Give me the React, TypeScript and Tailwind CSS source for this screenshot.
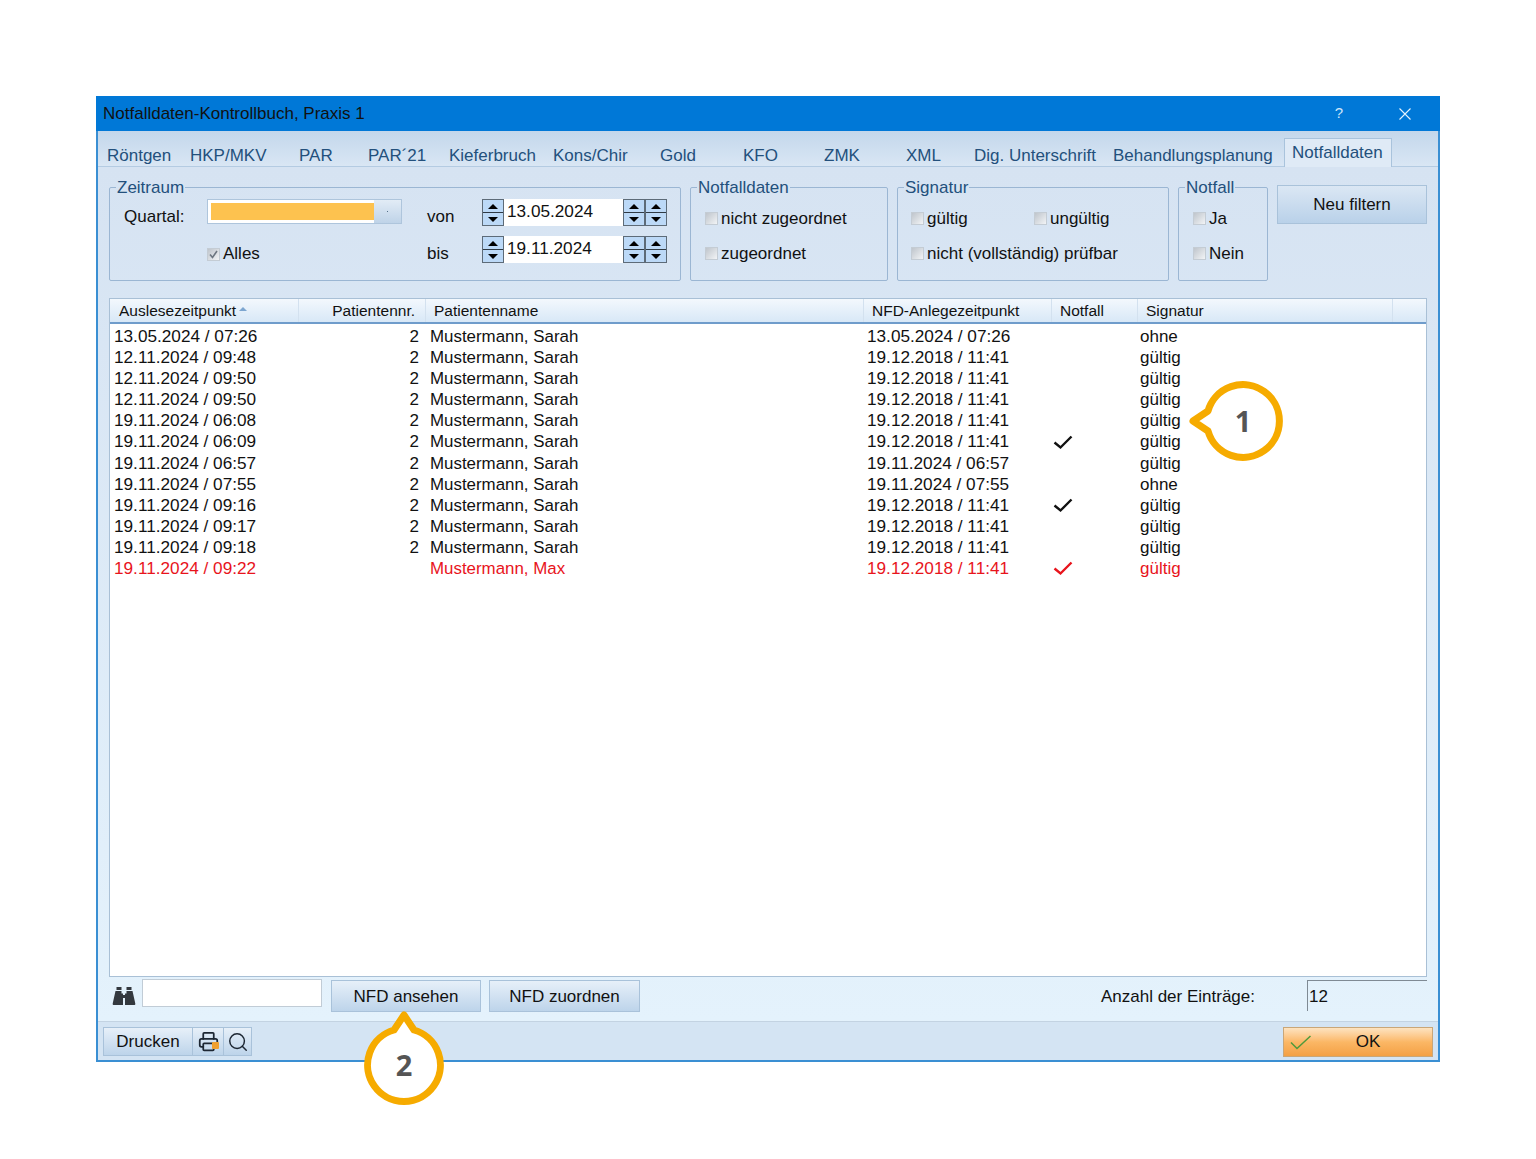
import React from 'react';
import { Printer, Search } from 'lucide-react';

const tabs = [
  { label: 'Röntgen', w: 'w-[83px]' },
  { label: 'HKP/MKV', w: 'w-[109px]' },
  { label: 'PAR', w: 'w-[69px]' },
  { label: 'PAR´21', w: 'w-[81px]' },
  { label: 'Kieferbruch', w: 'w-[104px]' },
  { label: 'Kons/Chir', w: 'w-[107px]' },
  { label: 'Gold', w: 'w-[83px]' },
  { label: 'KFO', w: 'w-[81px]' },
  { label: 'ZMK', w: 'w-[82px]' },
  { label: 'XML', w: 'w-[68px]' },
  { label: 'Dig. Unterschrift', w: 'w-[139px]' },
  { label: 'Behandlungsplanung', w: 'w-[171px]' },
];

const cols = 'grid grid-cols-[189px_127px_438px_188px_86px_255px_1fr]';

type Row = { read: string; nr: string; name: string; nfd: string; flag?: boolean; sig: string; red?: boolean };

const rows: Row[] = [
  { read: '13.05.2024 / 07:26', nr: '2', name: 'Mustermann, Sarah', nfd: '13.05.2024 / 07:26', sig: 'ohne' },
  { read: '12.11.2024 / 09:48', nr: '2', name: 'Mustermann, Sarah', nfd: '19.12.2018 / 11:41', sig: 'gültig' },
  { read: '12.11.2024 / 09:50', nr: '2', name: 'Mustermann, Sarah', nfd: '19.12.2018 / 11:41', sig: 'gültig' },
  { read: '12.11.2024 / 09:50', nr: '2', name: 'Mustermann, Sarah', nfd: '19.12.2018 / 11:41', sig: 'gültig' },
  { read: '19.11.2024 / 06:08', nr: '2', name: 'Mustermann, Sarah', nfd: '19.12.2018 / 11:41', sig: 'gültig' },
  { read: '19.11.2024 / 06:09', nr: '2', name: 'Mustermann, Sarah', nfd: '19.12.2018 / 11:41', flag: true, sig: 'gültig' },
  { read: '19.11.2024 / 06:57', nr: '2', name: 'Mustermann, Sarah', nfd: '19.11.2024 / 06:57', sig: 'gültig' },
  { read: '19.11.2024 / 07:55', nr: '2', name: 'Mustermann, Sarah', nfd: '19.11.2024 / 07:55', sig: 'ohne' },
  { read: '19.11.2024 / 09:16', nr: '2', name: 'Mustermann, Sarah', nfd: '19.12.2018 / 11:41', flag: true, sig: 'gültig' },
  { read: '19.11.2024 / 09:17', nr: '2', name: 'Mustermann, Sarah', nfd: '19.12.2018 / 11:41', sig: 'gültig' },
  { read: '19.11.2024 / 09:18', nr: '2', name: 'Mustermann, Sarah', nfd: '19.12.2018 / 11:41', sig: 'gültig' },
  { read: '19.11.2024 / 09:22', nr: '', name: 'Mustermann, Max', nfd: '19.12.2018 / 11:41', flag: true, sig: 'gültig', red: true },
];

export default function App() {
  return (
    <div className="relative h-[1159px] bg-white pl-[96px] pt-[96px] text-[17px] text-[#111] [font-family:'Liberation_Sans',Arial,sans-serif]">
      <div className="flex h-[966px] w-[1344px] flex-col border-x-2 border-b-2 border-[#3a8fd3]">
        {/* Title bar */}
        <div className="-mx-[2px] flex h-[35px] shrink-0 items-center bg-[#0078d7] pl-[7px]">
          <span className="flex-1">Notfalldaten-Kontrollbuch, Praxis 1</span>
          <span className="mr-[56px] text-[15px] text-[#cfe6fa]">?</span>
          <svg className="mr-[29px]" width="12" height="12" viewBox="0 0 12 12" fill="none" stroke="#e6f3fd" strokeWidth="1.1">
            <path d="M0.5 0.5 11.5 11.5M11.5 0.5 0.5 11.5" />
          </svg>
        </div>

        {/* Tabs */}
        <div className="flex h-[36px] shrink-0 items-end border-b border-[#b4cbe2] bg-gradient-to-b from-[#c3d7eb] to-[#d9e6f4] pl-[9px] text-[#23507c]">
          {tabs.map((t) => (
            <div key={t.label} className={`${t.w} h-[35px] shrink-0 whitespace-nowrap pt-[14px] leading-[22px]`}>
              {t.label}
            </div>
          ))}
          <div className="-mb-px h-[29px] w-[108px] shrink-0 border-x border-t border-[#a9c3dc] bg-[#dfeaf6] pl-[7px] leading-[28px]">
            Notfalldaten
          </div>
        </div>

        {/* Filters, list, search bar */}
        <div className="flex min-h-0 flex-1 flex-col bg-gradient-to-b from-[#d6e3f2] to-[#e4f2fc] px-[11px]">
          <div className="flex h-[131px] shrink-0 items-start gap-[9px] pt-[11px]">
            <Group title="Zeitraum" className="w-[572px]">
              <div className="grid grid-cols-[83px_220px_55px_185px] grid-rows-[27px_27px] gap-y-[10px] pl-[14px] pt-[2px]">
                <span className="leading-[36px]">Quartal:</span>
                <div className="flex h-[25px] w-[195px] border border-[#aec5dc] bg-white">
                  <div className="m-[3px] mr-0 w-[164px] bg-[#fdc24f]" />
                  <div className="ml-auto flex w-[27px] items-center justify-center bg-gradient-to-b from-[#e2ecf6] to-[#bfd3e8]">
                    <span className="h-[1px] w-[1px] bg-[#55708a]" />
                  </div>
                </div>
                <span className="leading-[36px]">von</span>
                <DateField value="13.05.2024" />
                <span />
                <label className="flex h-[36px] items-center">
                  <Check checked />
                  <span className="ml-[3px]">Alles</span>
                </label>
                <span className="leading-[36px]">bis</span>
                <DateField value="19.11.2024" />
              </div>
            </Group>
            <Group title="Notfalldaten" className="w-[198px]">
              <div className="flex flex-col gap-[16px] pl-[14px] pt-[12px]">
                <CheckLabel label="nicht zugeordnet" />
                <CheckLabel label="zugeordnet" />
              </div>
            </Group>
            <Group title="Signatur" className="w-[272px]">
              <div className="flex flex-col gap-[16px] pl-[13px] pt-[12px]">
                <div className="grid grid-cols-[123px_1fr]">
                  <CheckLabel label="gültig" />
                  <CheckLabel label="ungültig" />
                </div>
                <CheckLabel label="nicht (vollständig) prüfbar" />
              </div>
            </Group>
            <Group title="Notfall" className="w-[90px]">
              <div className="flex flex-col gap-[16px] pl-[14px] pt-[12px]">
                <CheckLabel label="Ja" />
                <CheckLabel label="Nein" />
              </div>
            </Group>
            <button className="mt-[7px] h-[39px] w-[150px] shrink-0 border border-[#a9c2da] bg-gradient-to-b from-[#dbe7f4] to-[#b9d1e9] pt-[1px]">
              Neu filtern
            </button>
          </div>

          {/* List */}
          <div className="flex min-h-0 flex-1 flex-col border border-[#a9c0d6] bg-white">
            <div className={`${cols} h-[25px] shrink-0 border-b-2 border-[#6f9ccb] bg-gradient-to-b from-[#f3f8fd] to-[#d8e8f7] text-[15.5px] leading-[23px]`}>
              <div className="flex border-r border-[#d3e1ef] pl-[9px]">
                Auslesezeitpunkt
                <span className="ml-[3px] mt-[8px] h-0 w-0 border-x-[4px] border-b-[4px] border-x-transparent border-b-[#7da6d0]" />
              </div>
              <div className="border-r border-[#d3e1ef] pr-[10px] text-right">Patientennr.</div>
              <div className="border-r border-[#d3e1ef] pl-[8px]">Patientenname</div>
              <div className="border-r border-[#d3e1ef] pl-[8px]">NFD-Anlegezeitpunkt</div>
              <div className="border-r border-[#d3e1ef] pl-[8px]">Notfall</div>
              <div className="border-r border-[#d3e1ef] pl-[8px]">Signatur</div>
              <div />
            </div>
            <div className="pt-[2px]">
              {rows.map((r, i) => (
                <div key={i} className={`${cols} h-[21.1px] leading-[21px] ${r.red ? 'text-[#e8141c]' : ''}`}>
                  <div className="pl-[4px] text-[17.2px]">{r.read}</div>
                  <div className="pr-[7px] text-right">{r.nr}</div>
                  <div className="pl-[4px] text-[16.9px]">{r.name}</div>
                  <div className="pl-[3px] text-[17.2px]">{r.nfd}</div>
                  <div className="flex items-center pl-[1px]">
                    {r.flag && (
                      <svg width="20" height="15" viewBox="0 0 20 15" fill="none" stroke={r.red ? '#e8141c' : '#111'} strokeWidth="2.4">
                        <path d="M1.5 7.5 7.5 12.5 18.5 1.5" />
                      </svg>
                    )}
                  </div>
                  <div className="pl-[2px]">{r.sig}</div>
                  <div />
                </div>
              ))}
            </div>
          </div>

          {/* Search bar */}
          <div className="flex h-[44px] shrink-0 items-start pt-[2px]">
            <svg className="ml-[3px] mt-[7px]" width="24" height="20" viewBox="0 0 24 20" fill="#33383e">
              <path d="M4.5 1h5v3h-5zM14.5 1h5v3h-5z" />
              <path d="M3.5 5H9.5V7.5H11V19H1.5Q0.5 19 0.7 17.5zM20.5 5H14.5V7.5H13V19H22.5Q23.5 19 23.3 17.5z" />
              <path d="M11 9h2v3h-2z" />
            </svg>
            <div className="ml-[6px] h-[28px] w-[180px] border border-[#c1ccd6] bg-white" />
            <button className="ml-[9px] mt-[1px] h-[32px] w-[150px] border border-[#a9c2da] bg-gradient-to-b from-[#e7f0f9] to-[#bdd4ea] pt-[1px]">
              NFD ansehen
            </button>
            <button className="ml-[8px] mt-[1px] h-[32px] w-[151px] border border-[#a9c2da] bg-gradient-to-b from-[#e7f0f9] to-[#bdd4ea] pt-[1px]">
              NFD zuordnen
            </button>
            <span className="ml-auto mt-[1px] leading-[34px]">Anzahl der Einträge:</span>
            <div className="ml-[52px] mt-[1px] h-[31px] w-[120px] border-l border-t border-[#7f8a94] pl-[1px] leading-[32px]">12</div>
          </div>
        </div>

        {/* Footer */}
        <div className="flex h-[39px] shrink-0 items-start border-t border-[#c3d3e2] bg-[#d4e4f3] pl-[5px] pt-[5px]">
          <button className="h-[29px] w-[90px] border border-[#a9c2da] bg-gradient-to-b from-[#e7f0f9] to-[#bdd4ea]">Drucken</button>
          <button className="flex h-[29px] w-[31px] items-center justify-center border border-l-0 border-[#a9c2da] bg-gradient-to-b from-[#e7f0f9] to-[#bdd4ea]">
            <span className="relative">
              <Printer size={21} strokeWidth={2} color="#1d2733" />
              <span className="absolute bottom-[3px] right-0 h-[7px] w-[7px] rounded-[1px] bg-[#f0a030]" />
            </span>
          </button>
          <button className="flex h-[29px] w-[28px] items-center justify-center border border-l-0 border-[#a9c2da] bg-gradient-to-b from-[#e7f0f9] to-[#bdd4ea]">
            <Search size={22} strokeWidth={1.6} color="#1d2733" />
          </button>
          <button className="relative ml-auto mr-[5px] flex h-[30px] w-[150px] items-center justify-center border border-[#c9a678] bg-gradient-to-b from-[#fde3c0] via-[#fbb765] to-[#f4a043] pl-[20px]">
            <svg className="absolute left-[6px] top-[7px]" width="22" height="15" viewBox="0 0 22 15" fill="none" stroke="#4f9a3c" strokeWidth="1.5">
              <path d="M1 7.5 7 13.5 20.5 1" />
            </svg>
            OK
          </button>
        </div>
      </div>

      <Callout className="left-[1187px] top-[365px]" n="1" />
      <Callout className="left-[348px] top-[1009px]" n="2" up />
    </div>
  );
}

function Group({ title, className, children }: { title: string; className: string; children: React.ReactNode }) {
  return (
    <fieldset className={`${className} h-[103px] shrink-0 rounded-[2px] border border-[#9bb6d3]`}>
      <legend className="ml-[6px] px-[1px] leading-[19px] text-[#23507c]">{title}</legend>
      {children}
    </fieldset>
  );
}

function Check({ checked }: { checked?: boolean }) {
  return (
    <span className="flex h-[13px] w-[13px] shrink-0 items-center justify-center border border-[#c4ccd4] bg-gradient-to-br from-[#bfc5cc] to-[#f2f4f6]">
      {checked && (
        <svg width="9" height="9" viewBox="0 0 9 9" fill="none" stroke="#6d7680" strokeWidth="1.6">
          <path d="M1 4.5 3.5 7.5 8 1" />
        </svg>
      )}
    </span>
  );
}

function CheckLabel({ label }: { label: string }) {
  return (
    <label className="flex h-[19px] items-center whitespace-nowrap">
      <Check />
      <span className="ml-[3px]">{label}</span>
    </label>
  );
}

function SpinButton() {
  return (
    <div className="flex h-[27px] w-[22px] shrink-0 flex-col border border-[#5d6b78] bg-[#bcd9f7]">
      <div className="flex flex-1 items-center justify-center border-b border-[#2f3a44]">
        <span className="h-0 w-0 border-x-[5px] border-b-[5px] border-x-transparent border-b-black" />
      </div>
      <div className="flex flex-1 items-center justify-center">
        <span className="h-0 w-0 border-x-[5px] border-t-[5px] border-x-transparent border-t-black" />
      </div>
    </div>
  );
}

function DateField({ value }: { value: string }) {
  return (
    <div className="flex h-[27px]">
      <SpinButton />
      <div className="w-[119px] bg-white pl-[3px] leading-[25px] text-[17.2px]">{value}</div>
      <SpinButton />
      <SpinButton />
    </div>
  );
}

function Callout({ className, n, up }: { className: string; n: string; up?: boolean }) {
  return (
    <div className={`absolute ${className} flex h-[112px] w-[112px] items-center justify-center`}>
      <svg className="absolute left-0 top-0" width="112" height="112" viewBox="-56 -56 112 112" fill="#fff" stroke="#f6ab00" strokeWidth="7" strokeLinejoin="round">
        <path transform={up ? 'rotate(90)' : undefined} d="M-35 -10 A36.4 36.4 0 1 1 -35 10 L-50 0 Z" />
      </svg>
      <span className="relative text-[29px] font-bold text-[#555] [font-family:'Open_Sans',sans-serif]">{n}</span>
    </div>
  );
}
